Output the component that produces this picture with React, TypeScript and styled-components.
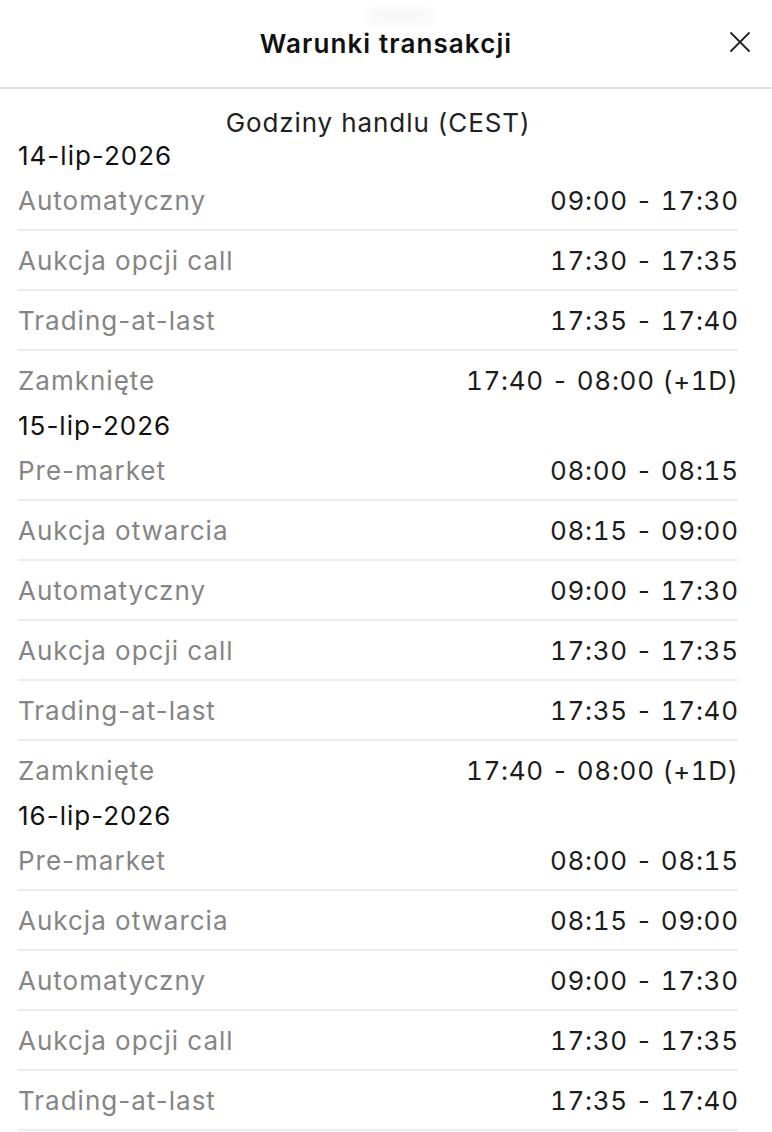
import React from "react";
import styled, { createGlobalStyle } from "styled-components";

const Global = createGlobalStyle`
  html, body { margin: 0; padding: 0; background: #ffffff; }
  body { font-family: Inter, "Noto Sans", sans-serif; -webkit-font-smoothing: antialiased; }
`;

const Sheet = styled.div`
  width: 772px;
  height: 1132px;
  background: #fff;
  overflow: hidden;
`;

const Header = styled.header`
  position: relative;
  height: 87px;
  display: flex;
  align-items: center;
  justify-content: center;
  border-bottom: 2px solid #e2e2e2;
`;

const Handle = styled.div`
  position: absolute;
  top: 6px;
  left: 368px;
  width: 64px;
  height: 18px;
  border-radius: 9px;
  background: #f8f8f8;
  filter: blur(4px);
`;

const Title = styled.h1`
  margin: 0;
  font-size: 26px;
  font-weight: 600;
  color: #111;
  letter-spacing: 1.1px;
`;

const CloseButton = styled.button`
  position: absolute;
  right: 20px;
  top: 30px;
  width: 24px;
  height: 24px;
  padding: 0;
  border: none;
  background: none;
  display: flex;
  align-items: center;
  justify-content: center;
`;

const Body = styled.main`
  padding: 0 34px 0 18px;
`;

const Subtitle = styled.div`
  padding-top: 16px;
  line-height: 36px;
  font-size: 26px;
  letter-spacing: 0.9px;
  color: #222;
  text-align: center;
`;

const DateLabel = styled.div`
  line-height: 30px;
  font-size: 26px;
  letter-spacing: 1px;
  color: #111;
`;

const Row = styled.div<{ $last?: boolean }>`
  height: 58px;
  display: flex;
  align-items: center;
  justify-content: space-between;
  font-size: 26px;
  border-bottom: 2px solid ${(p) => (p.$last ? "transparent" : "#ececec")};
`;

const Label = styled.span`
  color: #858585;
  letter-spacing: 1px;
`;

const Value = styled.span`
  color: #1c1c1c;
  font-variant-numeric: tabular-nums;
  letter-spacing: 0.7px;
  margin-right: -0.7px;
`;

type Session = [string, string];

const full: Session[] = [
  ["Pre-market", "08:00 - 08:15"],
  ["Aukcja otwarcia", "08:15 - 09:00"],
  ["Automatyczny", "09:00 - 17:30"],
  ["Aukcja opcji call", "17:30 - 17:35"],
  ["Trading-at-last", "17:35 - 17:40"],
  ["Zamknięte", "17:40 - 08:00 (+1D)"],
];

const days: { date: string; sessions: Session[] }[] = [
  { date: "14-lip-2026", sessions: full.slice(2) },
  { date: "15-lip-2026", sessions: full },
  { date: "16-lip-2026", sessions: full.slice(0, 5) },
];

export default function App() {
  return (
    <Sheet>
      <Global />
      <Header>
        <Handle />
        <Title>Warunki transakcji</Title>
        <CloseButton aria-label="Zamknij">
          <svg width="22" height="22" viewBox="0 0 22 22">
            <path d="M2 2 L20 20 M20 2 L2 20" stroke="#222" strokeWidth="1.8" strokeLinecap="round" />
          </svg>
        </CloseButton>
      </Header>
      <Body>
        <Subtitle>Godziny handlu (CEST)</Subtitle>
        {days.map((d, di) => (
          <section key={d.date}>
            <DateLabel>{d.date}</DateLabel>
            {d.sessions.map(([l, v], i) => (
              <Row key={l} $last={di < days.length - 1 && i === d.sessions.length - 1}>
                <Label>{l}</Label>
                <Value>{v}</Value>
              </Row>
            ))}
          </section>
        ))}
      </Body>
    </Sheet>
  );
}
